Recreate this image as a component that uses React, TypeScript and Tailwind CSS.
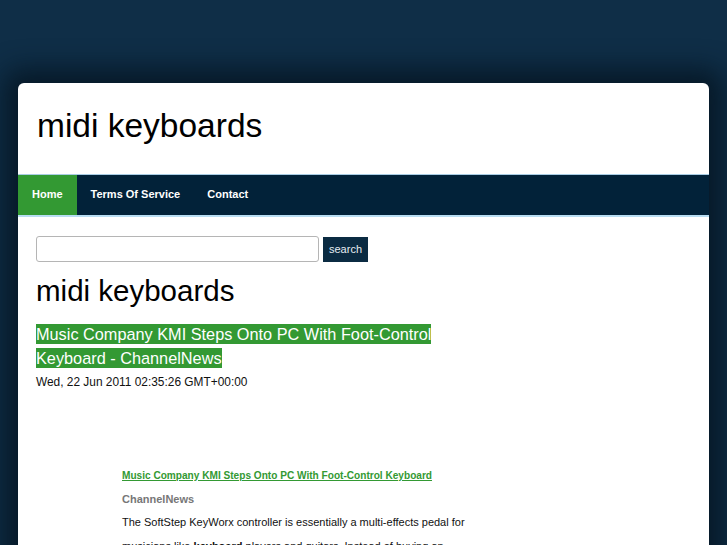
export default function App() {
  return (
    <div className="min-h-[545px] bg-[#0f2e47] pt-[83px] px-[18px] font-['Liberation_Sans',Arial,sans-serif]">
      <div className="bg-white rounded-t-[6px] shadow-[0_0_26px_14px_rgba(5,20,32,0.8)] min-h-[470px]">
        <header className="h-[91px] flex items-center px-[19px]">
          <h1 className="text-[33.5px] text-black leading-none pb-[6px]">midi keyboards</h1>
        </header>
        <nav className="bg-[#022239] border-t border-[#a9cde4] border-b-2 border-b-[#b8ddf2] flex h-[43px]">
          <a className="bg-[#339933] text-white text-[11px] font-bold px-[14px] flex items-center pb-[2px]">Home</a>
          <a className="text-white text-[11px] font-bold px-[14px] flex items-center pb-[2px]">Terms Of Service</a>
          <a className="text-white text-[11px] font-bold px-[13px] flex items-center pb-[2px]">Contact</a>
        </nav>
        <main className="px-[18px] pt-[19px]">
          <div className="flex items-center gap-[4px]">
            <input className="w-[283px] h-[26px] border border-[#b5b5b5] rounded-[3px] bg-white" />
            <button className="bg-[#0b2b42] text-[#e6edf2] text-[11px] h-[25px] px-[6px]">search</button>
          </div>
          <h2 className="text-[29.5px] text-black mt-[10px] leading-[38px]">midi keyboards</h2>
          <div className="mt-[12px] w-[420px] text-[16.3px] leading-[24px]">
            <a className="bg-[#339933] text-white py-[1px] [box-decoration-break:clone]">
              Music Company KMI Steps Onto PC With Foot-Control Keyboard - ChannelNews
            </a>
          </div>
          <p className="text-[11.9px] text-[#111] mt-[2px] leading-[20px]">Wed, 22 Jun 2011 02:35:26 GMT+00:00</p>
          <div className="ml-[86px] mt-[72px] w-[350px] text-[11px] leading-[23.5px]">
            <a className="text-[#339933] text-[10.1px] font-bold underline">
              Music Company KMI Steps Onto PC With Foot-Control Keyboard
            </a>
            <p className="text-[#777] font-bold">ChannelNews</p>
            <p className="text-[#111]">
              The SoftStep KeyWorx controller is essentially a multi-effects pedal for musicians like{" "}
              <b>keyboard</b> players and guitars. Instead of buying an expensive set of pedals, players can
              use the controller to trigger sounds.
            </p>
          </div>
        </main>
      </div>
    </div>
  );
}
